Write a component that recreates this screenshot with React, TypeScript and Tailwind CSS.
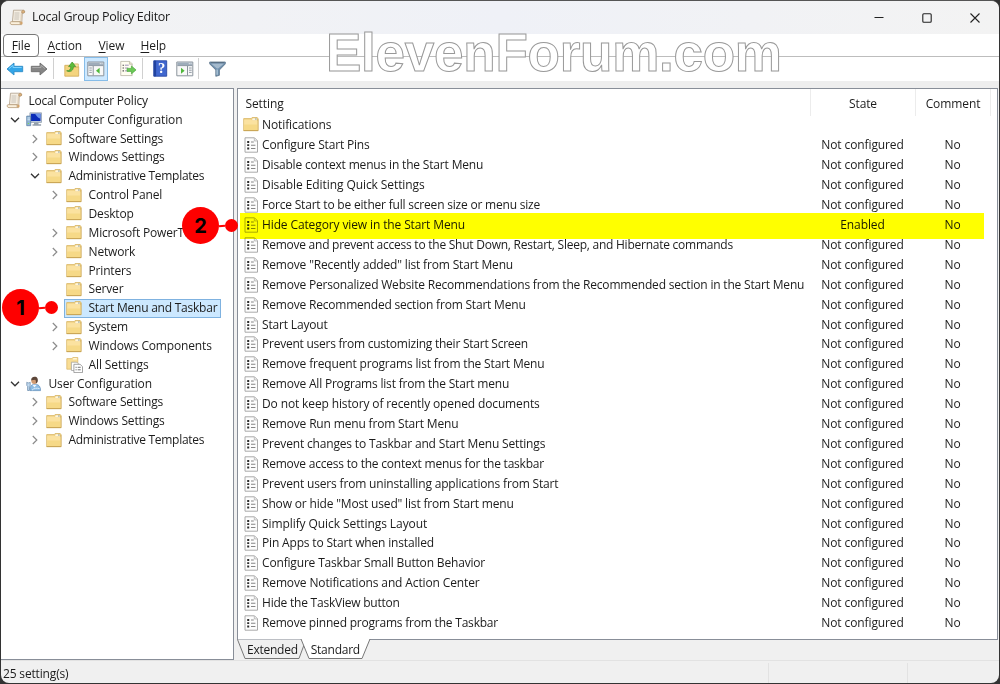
import type { ReactNode } from 'react'

type IconKind = 'scroll' | 'computer' | 'user' | 'folder' | 'all'

interface TreeNode {
  label: string
  depth: number
  icon: IconKind
  arrow?: 'open' | 'closed'
  selected?: boolean
  tracking?: string
}

interface Setting {
  name: string
  state?: string
  folder?: boolean
  tracking?: string
}

const tree: TreeNode[] = [
  { label: 'Local Computer Policy', depth: 0, icon: 'scroll', tracking: 'tracking-[-0.22px]' },
  { label: 'Computer Configuration', depth: 1, icon: 'computer', arrow: 'open', tracking: 'tracking-[-0.1px]' },
  { label: 'Software Settings', depth: 2, icon: 'folder', arrow: 'closed' },
  { label: 'Windows Settings', depth: 2, icon: 'folder', arrow: 'closed' },
  { label: 'Administrative Templates', depth: 2, icon: 'folder', arrow: 'open', tracking: 'tracking-[-0.28px]' },
  { label: 'Control Panel', depth: 3, icon: 'folder', arrow: 'closed' },
  { label: 'Desktop', depth: 3, icon: 'folder' },
  { label: 'Microsoft PowerToys', depth: 3, icon: 'folder', arrow: 'closed' },
  { label: 'Network', depth: 3, icon: 'folder', arrow: 'closed' },
  { label: 'Printers', depth: 3, icon: 'folder' },
  { label: 'Server', depth: 3, icon: 'folder' },
  { label: 'Start Menu and Taskbar', depth: 3, icon: 'folder', selected: true, tracking: 'tracking-[-0.23px]' },
  { label: 'System', depth: 3, icon: 'folder', arrow: 'closed' },
  { label: 'Windows Components', depth: 3, icon: 'folder', arrow: 'closed' },
  { label: 'All Settings', depth: 3, icon: 'all', tracking: 'tracking-[-0.1px]' },
  { label: 'User Configuration', depth: 1, icon: 'user', arrow: 'open', tracking: 'tracking-[-0.13px]' },
  { label: 'Software Settings', depth: 2, icon: 'folder', arrow: 'closed' },
  { label: 'Windows Settings', depth: 2, icon: 'folder', arrow: 'closed' },
  { label: 'Administrative Templates', depth: 2, icon: 'folder', arrow: 'closed', tracking: 'tracking-[-0.28px]' },
]

const settings: Setting[] = [
  { name: 'Notifications', folder: true, tracking: 'tracking-[-0.1px]' },
  { name: 'Configure Start Pins' },
  { name: 'Disable context menus in the Start Menu' },
  { name: 'Disable Editing Quick Settings', tracking: 'tracking-[-0.08px]' },
  { name: 'Force Start to be either full screen size or menu size', tracking: 'tracking-[-0.2px]' },
  { name: 'Hide Category view in the Start Menu', state: 'Enabled', tracking: 'tracking-[-0.12px]' },
  { name: 'Remove and prevent access to the Shut Down, Restart, Sleep, and Hibernate commands', tracking: 'tracking-[-0.245px]' },
  { name: 'Remove "Recently added" list from Start Menu' },
  { name: 'Remove Personalized Website Recommendations from the Recommended section in the Start Menu', tracking: 'tracking-[-0.19px]' },
  { name: 'Remove Recommended section from Start Menu', tracking: 'tracking-[-0.2px]' },
  { name: 'Start Layout' },
  { name: 'Prevent users from customizing their Start Screen', tracking: 'tracking-[-0.24px]' },
  { name: 'Remove frequent programs list from the Start Menu' },
  { name: 'Remove All Programs list from the Start menu', tracking: 'tracking-[-0.2px]' },
  { name: 'Do not keep history of recently opened documents', tracking: 'tracking-[-0.13px]' },
  { name: 'Remove Run menu from Start Menu' },
  { name: 'Prevent changes to Taskbar and Start Menu Settings' },
  { name: 'Remove access to the context menus for the taskbar', tracking: 'tracking-[-0.22px]' },
  { name: 'Prevent users from uninstalling applications from Start' },
  { name: 'Show or hide "Most used" list from Start menu' },
  { name: 'Simplify Quick Settings Layout', tracking: 'tracking-[-0.08px]' },
  { name: 'Pin Apps to Start when installed' },
  { name: 'Configure Taskbar Small Button Behavior' },
  { name: 'Remove Notifications and Action Center', tracking: 'tracking-[-0.13px]' },
  { name: 'Hide the TaskView button', tracking: 'tracking-[-0.22px]' },
  { name: 'Remove pinned programs from the Taskbar', tracking: 'tracking-[-0.21px]' },
]

function ScrollIcon() {
  return (
    <svg width="17" height="17" viewBox="0 0 17 17">
      <path d="M4.5 1.2h9.8c1.5 0 1.6 2.8 0 2.8h-1l-.5 8.8H3.4z" fill="#f5eee2" stroke="#b0a08a" strokeWidth=".8" />
      <path d="M12.7 4V2.4c.3-1.5 3.2-1.4 3.1.5-.1 1.1-1.3 1.3-2.5 1.1z" fill="#dcb27d" stroke="#ad8c62" strokeWidth=".6" />
      <path d="M11.8 4.2h1.2l-.4 8.5h-1.2z" fill="#dccdb6" />
      <path d="M1.9 12.7h9.4c-.7 1.2 0 2.9 1.1 2.9H3c-2 0-2.5-2.4-1.1-2.9z" fill="#fbf0dc" stroke="#b59a76" strokeWidth=".8" />
      <path d="M11.4 12.7c-.7 1.2 0 2.9 1.1 2.9 1 0 1.4-1.4.8-2.9z" fill="#d2a36b" />
      <path d="M5.6 4h4.8M5.5 6h4.8M5.4 8h4.8M5.3 10h4.6" stroke="#bcb6ae" strokeWidth=".8" />
    </svg>
  )
}

function FolderIcon() {
  return (
    <svg width="16" height="15" viewBox="0 0 16 15">
      <path d="M.7 1.6h7.5l.9-1.1h5.1l.8 1v12.1H.7z" fill="#edcd7c" stroke="#d8b565" strokeWidth=".8" />
      <path d="M9.6 1.2h4.3v2.2H9z" fill="#fff5db" />
      <path d="M12 1.4h1.7v1.1H12z" fill="#8a9d9b" />
      <path d="M1.1 2.5h7.2l1.1 1.2h5.3v9.2H1.1z" fill="#fbe2a0" />
      <path d="M1.1 7.5h13.6v5.5H1.1z" fill="#f6d987" />
      <path d="M.6 13.6h14.6" stroke="#c5a04f" strokeWidth=".9" />
      <path d="M15.1 2v11.6" stroke="#cfae62" strokeWidth=".7" />
    </svg>
  )
}

function ComputerIcon() {
  return (
    <svg width="17" height="15" viewBox="0 0 17 15">
      <path d="M3.9.8h11.6v9.6H3.9z" fill="#c3cfdc" stroke="#8797a9" strokeWidth=".7" />
      <path d="M4.9 1.8h9.6v7.2H4.9z" fill="#0a2cb8" />
      <path d="M9 1.8h5.5v5C12 6.2 10.8 4.5 9 1.8z" fill="#6b93ea" />
      <path d="M8 10.4h4.5v1.8H8zM6.5 12.2h8.6v1.6H6.5z" fill="#939fab" />
      <path d="M.7 4.1h4v9.6h-4z" fill="#8db2d3" stroke="#577ba2" strokeWidth=".7" />
      <path d="M1.4 6h2.6M1.4 7.8h2.6" stroke="#e8f4ff" strokeWidth=".8" />
      <path d="M1.8 11.5h1.3" stroke="#82d957" />
    </svg>
  )
}

function UserIcon() {
  return (
    <svg width="17" height="16" viewBox="0 0 17 16">
      <path d="M4 14.6c-.2-4.4 1.3-6.4 4.9-6.4s5.6 2 5.6 6.4z" fill="#8dbce4" stroke="#5a8ab8" strokeWidth=".7" />
      <path d="M6.4 8.8l2 2.8 2.4-2.8z" fill="#eef7ff" />
      <circle cx="8.3" cy="5" r="3" fill="#d09b72" />
      <path d="M5.2 4.4C5 1.8 6.6.6 8.7.7c2.5 0 3.7 2 2.9 5-.6 1.2-1.2 1.6-1.8 1.6.3-1.7.2-3-.8-3.6-1.2.4-2.8.3-3.8.7z" fill="#5d473a" />
      <path d="M.8 6.2c1.2.9 2.2.9 3.4 0v3.2l-.8 1v4.1H1.6v-4.1l-.8-1z" fill="#c2daf0" stroke="#6485a6" strokeWidth=".7" />
      <path d="M6 14.2c1.5-2 4.8-2.4 7.6-1.6" fill="none" stroke="#d6ebfb" strokeWidth="1" />
    </svg>
  )
}

function AllSettingsIcon() {
  return (
    <svg width="18" height="16" viewBox="0 0 18 16">
      <path d="M.8 1.6h5l1-1.1h5v11.7H.8z" fill="#f9dd94" stroke="#d8b565" strokeWidth=".7" />
      <path d="M7.4 1.1h3.4v1.5H6.9z" fill="#fff6da" />
      <path d="M5.4 5.2h5.4l1.5 1.5v6.8H5.4z" fill="#fff" stroke="#999" strokeWidth=".7" />
      <path d="M7.9 7.3h6.2l2.4 2.3v6H7.9z" fill="#fff" stroke="#8c8c8c" strokeWidth=".8" />
      <path d="M9.5 10.3h1.2M11.7 10.3h3M9.5 12.8h1.2M11.7 12.8h3" stroke="#777" strokeWidth="1" />
    </svg>
  )
}

function PolicyIcon() {
  return (
    <svg width="15" height="16" viewBox="0 0 15 16">
      <path d="M1 .8h9.5l3 3v11.4H1z" fill="#fdfdfd" stroke="#a0a0a0" strokeWidth=".9" />
      <path d="M10.3 1v3h3" fill="#e8e8e8" stroke="#adadad" strokeWidth=".7" />
      <path d="M3.2 4.1h2v1.8h-2zM3.2 7.3h2v1.8h-2zM3.2 10.6h2v1.8h-2z" fill="#2b2b2b" />
      <path d="M7 5h2.8M7 8.2h4.4M7 11.5h4.4" stroke="#858585" strokeWidth="1.1" />
    </svg>
  )
}

function NodeIcon({ kind }: { kind: IconKind }) {
  switch (kind) {
    case 'scroll':
      return <ScrollIcon />
    case 'computer':
      return <ComputerIcon />
    case 'user':
      return <UserIcon />
    case 'all':
      return <AllSettingsIcon />
    default:
      return <FolderIcon />
  }
}

function Arrow({ state }: { state?: 'open' | 'closed' }) {
  return (
    <span className="flex w-[19px] shrink-0 items-center justify-center">
      {state === 'open' && (
        <svg width="10" height="6" viewBox="0 0 10 6" fill="none" stroke="#333" strokeWidth="1.3">
          <path d="M1 .8l4 4 4-4" />
        </svg>
      )}
      {state === 'closed' && (
        <svg width="6" height="10" viewBox="0 0 6 10" fill="none" stroke="#8b8b8b" strokeWidth="1.2">
          <path d="M.8 1l4 4-4 4" />
        </svg>
      )}
    </span>
  )
}

const indent = ['pl-[5px]', 'pl-[4px]', 'pl-[24px]', 'pl-[44px]']

function TreeRow({ node }: { node: TreeNode }) {
  return (
    <div className={`flex h-[18.85px] items-center whitespace-nowrap ${indent[node.depth]}`}>
      {node.depth > 0 && <Arrow state={node.arrow} />}
      <div
        className={`flex h-[19px] items-center ${node.depth > 0 ? 'pl-[1.5px] pr-[4px]' : ''} ${
          node.selected ? 'bg-[#cce8ff] outline outline-[#7fb2e0] -outline-offset-1' : ''
        }`}
      >
        <span className={`flex shrink-0 ${node.depth > 0 ? 'w-[23px]' : 'w-[22.5px]'}`}>
          <NodeIcon kind={node.icon} />
        </span>
        <span className={node.tracking ?? 'tracking-[-0.16px]'}>{node.label}</span>
      </div>
    </div>
  )
}

function Separator() {
  return <span className="h-[21px] w-px bg-[#d0d0d0]" />
}

function ToolArrow({ flip }: { flip?: boolean }) {
  return (
    <svg width="18" height="14" viewBox="0 0 18 14" className={flip ? '-scale-x-100' : ''}>
      <path
        d="M1 7l7-6v3.3h8.7v5.4H8V13z"
        fill={flip ? '#858585' : '#32a5e8'}
        stroke={flip ? '#6e6e6e' : '#2f8cc6'}
        strokeWidth=".9"
        strokeLinejoin="round"
      />
      <path d="M3 6.7L7 3.3v2.2h8.7" fill="none" stroke={flip ? '#aaa' : '#7bd2ff'} strokeWidth="1" />
    </svg>
  )
}

function PaneIcon({ green }: { green: 'left' | 'right' }) {
  return (
    <svg width="18" height="16" viewBox="0 0 18 16">
      <path d="M.8 1h16v13.8H.8z" fill="#f8f8f8" stroke="#8a939c" strokeWidth="1" />
      <path d="M1.3 1.5h15v2.6h-15z" fill="#9eacba" />
      <path d="M1.3 4.6h15" stroke="#8996a2" strokeWidth="1" />
      <path d="M12.8 2.7h.9M14.6 2.7h.9" stroke="#fff" strokeWidth="1" />
      {green === 'left' ? (
        <>
          <path d="M6.2 5v9.5" stroke="#8a939c" />
          <path d="M2.3 7h2.5M2.3 9.2h2.5M2.3 11.4h2.5" stroke="#87919c" strokeWidth=".9" />
          <path d="M12.6 6.8v6L9 9.8z" fill="#4fb83a" />
        </>
      ) : (
        <>
          <path d="M11.5 5v9.5" stroke="#8a939c" />
          <path d="M13 7h2.7M13 9.2h2.7M13 11.4h2.7" stroke="#87919c" strokeWidth=".9" />
          <path d="M5 6.8v6l3.6-3z" fill="#4fb83a" />
        </>
      )}
    </svg>
  )
}

function Toolbar() {
  return (
    <div className="flex h-[23px] shrink-0 items-center bg-white pl-[5px]">
      <ToolArrow />
      <span className="ml-[6px] flex"><ToolArrow flip /></span>
      <span className="ml-[5px] flex"><Separator /></span>
      <svg className="ml-[10px] shrink-0" width="16" height="16" viewBox="0 0 16 16">
        <path d="M.8 4.3h5.4l1.3 1.5h7.2v9.4H.8z" fill="#f4d47e" stroke="#d0aa55" strokeWidth=".8" />
        <path d="M9.5 2.9h4.8v3H9.2z" fill="#f8e5aa" stroke="#d0aa55" strokeWidth=".7" />
        <path d="M2.6 9.8c3 .2 4.3-1.5 4.2-4.2H4.6L8.2 1l3.5 4.6H9.4c0 4-3 6.2-6.8 4.2z" fill="#5dbd3c" stroke="#3c8f2a" strokeWidth=".7" />
      </svg>
      <span className="ml-1 flex h-6 w-6 shrink-0 items-center justify-center border border-[#86bce8] bg-[#cce8ff]">
        <PaneIcon green="left" />
      </span>
      <svg className="ml-3 shrink-0" width="17" height="17" viewBox="0 0 18 17">
        <path d="M.8 1h9.5l2.6 2.6V16H.8z" fill="#fffdf0" stroke="#b5b19f" strokeWidth=".8" />
        <path d="M10 1v3h3" fill="#e8e2cc" stroke="#b5b19f" strokeWidth=".7" />
        <path d="M2.8 5h1.2M2.8 8h1.2M2.8 11h1.2" stroke="#222" strokeWidth="1.1" />
        <path d="M5.2 5h4M5.2 8h3.5M5.2 11h3.5" stroke="#8f7eab" strokeWidth=".9" />
        <path d="M7.5 8.4h4.6V5.8L17 10l-4.9 4.2v-2.6H7.5z" fill="#6cc957" stroke="#4aa83c" strokeWidth=".7" />
      </svg>
      <span className="ml-[5px] flex"><Separator /></span>
      <svg className="ml-[10px] shrink-0" width="15" height="17" viewBox="0 0 15 17">
        <path d="M.8.8h12.9v15.4H.8z" fill="#4067cf" stroke="#2a4aa5" strokeWidth=".9" />
        <path d="M.8.8h2.3v15.4H.8z" fill="#21439f" />
        <text x="8.5" y="13.4" textAnchor="middle" fill="#fff" fontSize="14.5" fontWeight="700" fontFamily="Liberation Serif, serif">?</text>
      </svg>
      <span className="ml-2 flex"><PaneIcon green="right" /></span>
      <span className="ml-1 flex"><Separator /></span>
      <svg className="ml-[10px] shrink-0" width="17" height="16" viewBox="0 0 17 16">
        <path d="M.7 1h15.6v1.9L10.4 9v5.3l-3.6 1V9L.7 2.9z" fill="#6f90ae" stroke="#5c7389" strokeWidth=".8" />
        <path d="M2 2.4h13L9.2 7.4H7.9z" fill="#a4bacd" />
        <path d="M2 1.7h13" stroke="#56697b" strokeWidth=".9" />
        <path d="M8.1 8.5v5.3" stroke="#c8dce9" strokeWidth="1" />
      </svg>
    </div>
  )
}

function TitleBar() {
  return (
    <div className="flex h-[33px] shrink-0 items-center bg-linear-to-r from-[#f3f3f3] via-[#eff1f7] to-[#f3f3f3] pl-2">
      <ScrollIcon />
      <span className="ml-[6px] text-[12.5px] tracking-[-0.3px]">Local Group Policy Editor</span>
      <div className="ml-auto flex items-center gap-[38px] pr-[19.5px]">
        <svg width="10" height="10" viewBox="0 0 10 10" stroke="#222"><path d="M.5 4.5h9" /></svg>
        <svg width="10" height="10" viewBox="0 0 10 10" fill="none" stroke="#222" strokeWidth="1.1">
          <rect x=".8" y=".8" width="8.4" height="8.4" rx="1" />
        </svg>
        <svg width="10" height="10" viewBox="0 0 10 10" stroke="#222" strokeWidth="1.1"><path d="M.5.5l9 9M9.5.5l-9 9" /></svg>
      </div>
    </div>
  )
}

function MenuItem({ children, className }: { children: ReactNode; className: string }) {
  return (
    <span className={`flex h-[23px] items-center underline-offset-2 ${className}`}>
      <span>{children}</span>
    </span>
  )
}

function Callout({ n, className }: { n: number; className: string }) {
  return (
    <div className={`absolute flex items-center ${className}`}>
      <span className="flex size-[37px] items-center justify-center rounded-full bg-[#fe0000] font-['Inter',sans-serif] text-[20px] font-bold text-black">
        {n}
      </span>
      <span className="h-[2px] w-[6px] -rotate-6 bg-[#fe0000]" />
      <span className="size-[13px] rounded-full bg-[#fe0000]" />
    </div>
  )
}

export default function App() {
  return (
    <div className="relative h-[684px] w-[1000px] overflow-hidden bg-[#333] font-['Open_Sans','Noto_Sans',sans-serif] text-[12px] leading-none tracking-[-0.1px] text-[#1c1c1c]">
      <div className="ml-px flex h-[683px] w-[998px] flex-col overflow-hidden rounded-lg border-t border-[#555] bg-[#f0f0f0]">
        <TitleBar />

        <div className="flex h-[23px] shrink-0 border-b border-[#bdbdbd] bg-white pl-[2px]">
          <MenuItem className="w-[36px] justify-center rounded-[4px] border border-[#777]"><u>F</u>ile</MenuItem>
          <MenuItem className="ml-[8.5px] w-[51px]"><u>A</u>ction</MenuItem>
          <MenuItem className="w-[42px]"><u>V</u>iew</MenuItem>
          <MenuItem className=""><u>H</u>elp</MenuItem>
        </div>

        <div className="flex h-[31px] shrink-0 flex-col bg-white">
          <Toolbar />
          <div className="mt-px flex-1 bg-[#eee]" />
        </div>

        <div className="flex h-[572px] shrink-0 pr-px">
          <div className="w-[233px] shrink-0 overflow-hidden border-t border-r border-b border-[#888e98] bg-white pt-[2.5px]">
            {tree.map((node, i) => (
              <TreeRow key={i} node={node} />
            ))}
          </div>

          <div className="ml-[3px] flex min-w-0 flex-1 flex-col">
            <div className="relative h-[552px] shrink-0 overflow-hidden border border-[#888e98] bg-white">
              <div className="flex h-[26.5px] items-center">
                <span className="w-[572px] pt-[3px] pl-[7.5px]">Setting</span>
                <span className="flex h-full w-[105px] items-center justify-center border-l border-[#ececec] pt-[3px]">State</span>
                <span className="flex h-full w-[76px] items-center justify-center border-x border-[#ececec] pt-[3px]">Comment</span>
              </div>
              {settings.map((s) => (
                <div key={s.name} className="flex h-[19.91px] items-center pl-[6px] whitespace-nowrap">
                  <span className="flex w-[18px] shrink-0">
                    {s.folder ? <span className="-mt-px -ml-px"><FolderIcon /></span> : <PolicyIcon />}
                  </span>
                  <span className={`w-[548.5px] ${s.tracking ?? 'tracking-[-0.17px]'}`}>{s.name}</span>
                  {!s.folder && (
                    <>
                      <span className="w-[104px] text-center">{s.state ?? 'Not configured'}</span>
                      <span className="w-[76px] text-center">No</span>
                    </>
                  )}
                </div>
              ))}
              <div className="absolute top-[124px] left-[2px] h-[26px] w-[744px] bg-[#ffff00] mix-blend-multiply" />
            </div>

            <div className="relative h-5">
              <svg className="absolute -top-px left-0" width="140" height="21" viewBox="0 0 140 21">
                <path d="M.5.5L8 19.5h54L69 .5" fill="#f0f0f0" stroke="#777" />
                <path d="M64 0l8 19.5h53L133 0z" fill="#fff" />
                <path d="M64 0l8 19.5h53L133 0" fill="none" stroke="#777" />
              </svg>
              <div className="relative flex h-full items-center gap-[13px] pl-[10px] tracking-[-0.25px]">
                <span>Extended</span>
                <span>Standard</span>
              </div>
            </div>
          </div>
        </div>

        <div className="flex flex-1 border-t border-[#e2e2e2]">
          <span className="w-[767px] pt-[7px] pl-[2px] tracking-[-0.16px]">25 setting(s)</span>
          <span className="mt-[2px] w-[140px] border-x border-[#e2e2e2]" />
        </div>
      </div>

      <div className="absolute top-[23px] left-[326px] font-['Liberation_Sans',Arial,sans-serif] text-[53px] leading-[60px] font-bold tracking-[-0.25px] whitespace-nowrap text-white [-webkit-text-stroke:1px_#999]">
        ElevenForum.com
      </div>
      <Callout n={1} className="top-[289px] left-[2px]" />
      <Callout n={2} className="top-[207px] left-[182px]" />
    </div>
  )
}
